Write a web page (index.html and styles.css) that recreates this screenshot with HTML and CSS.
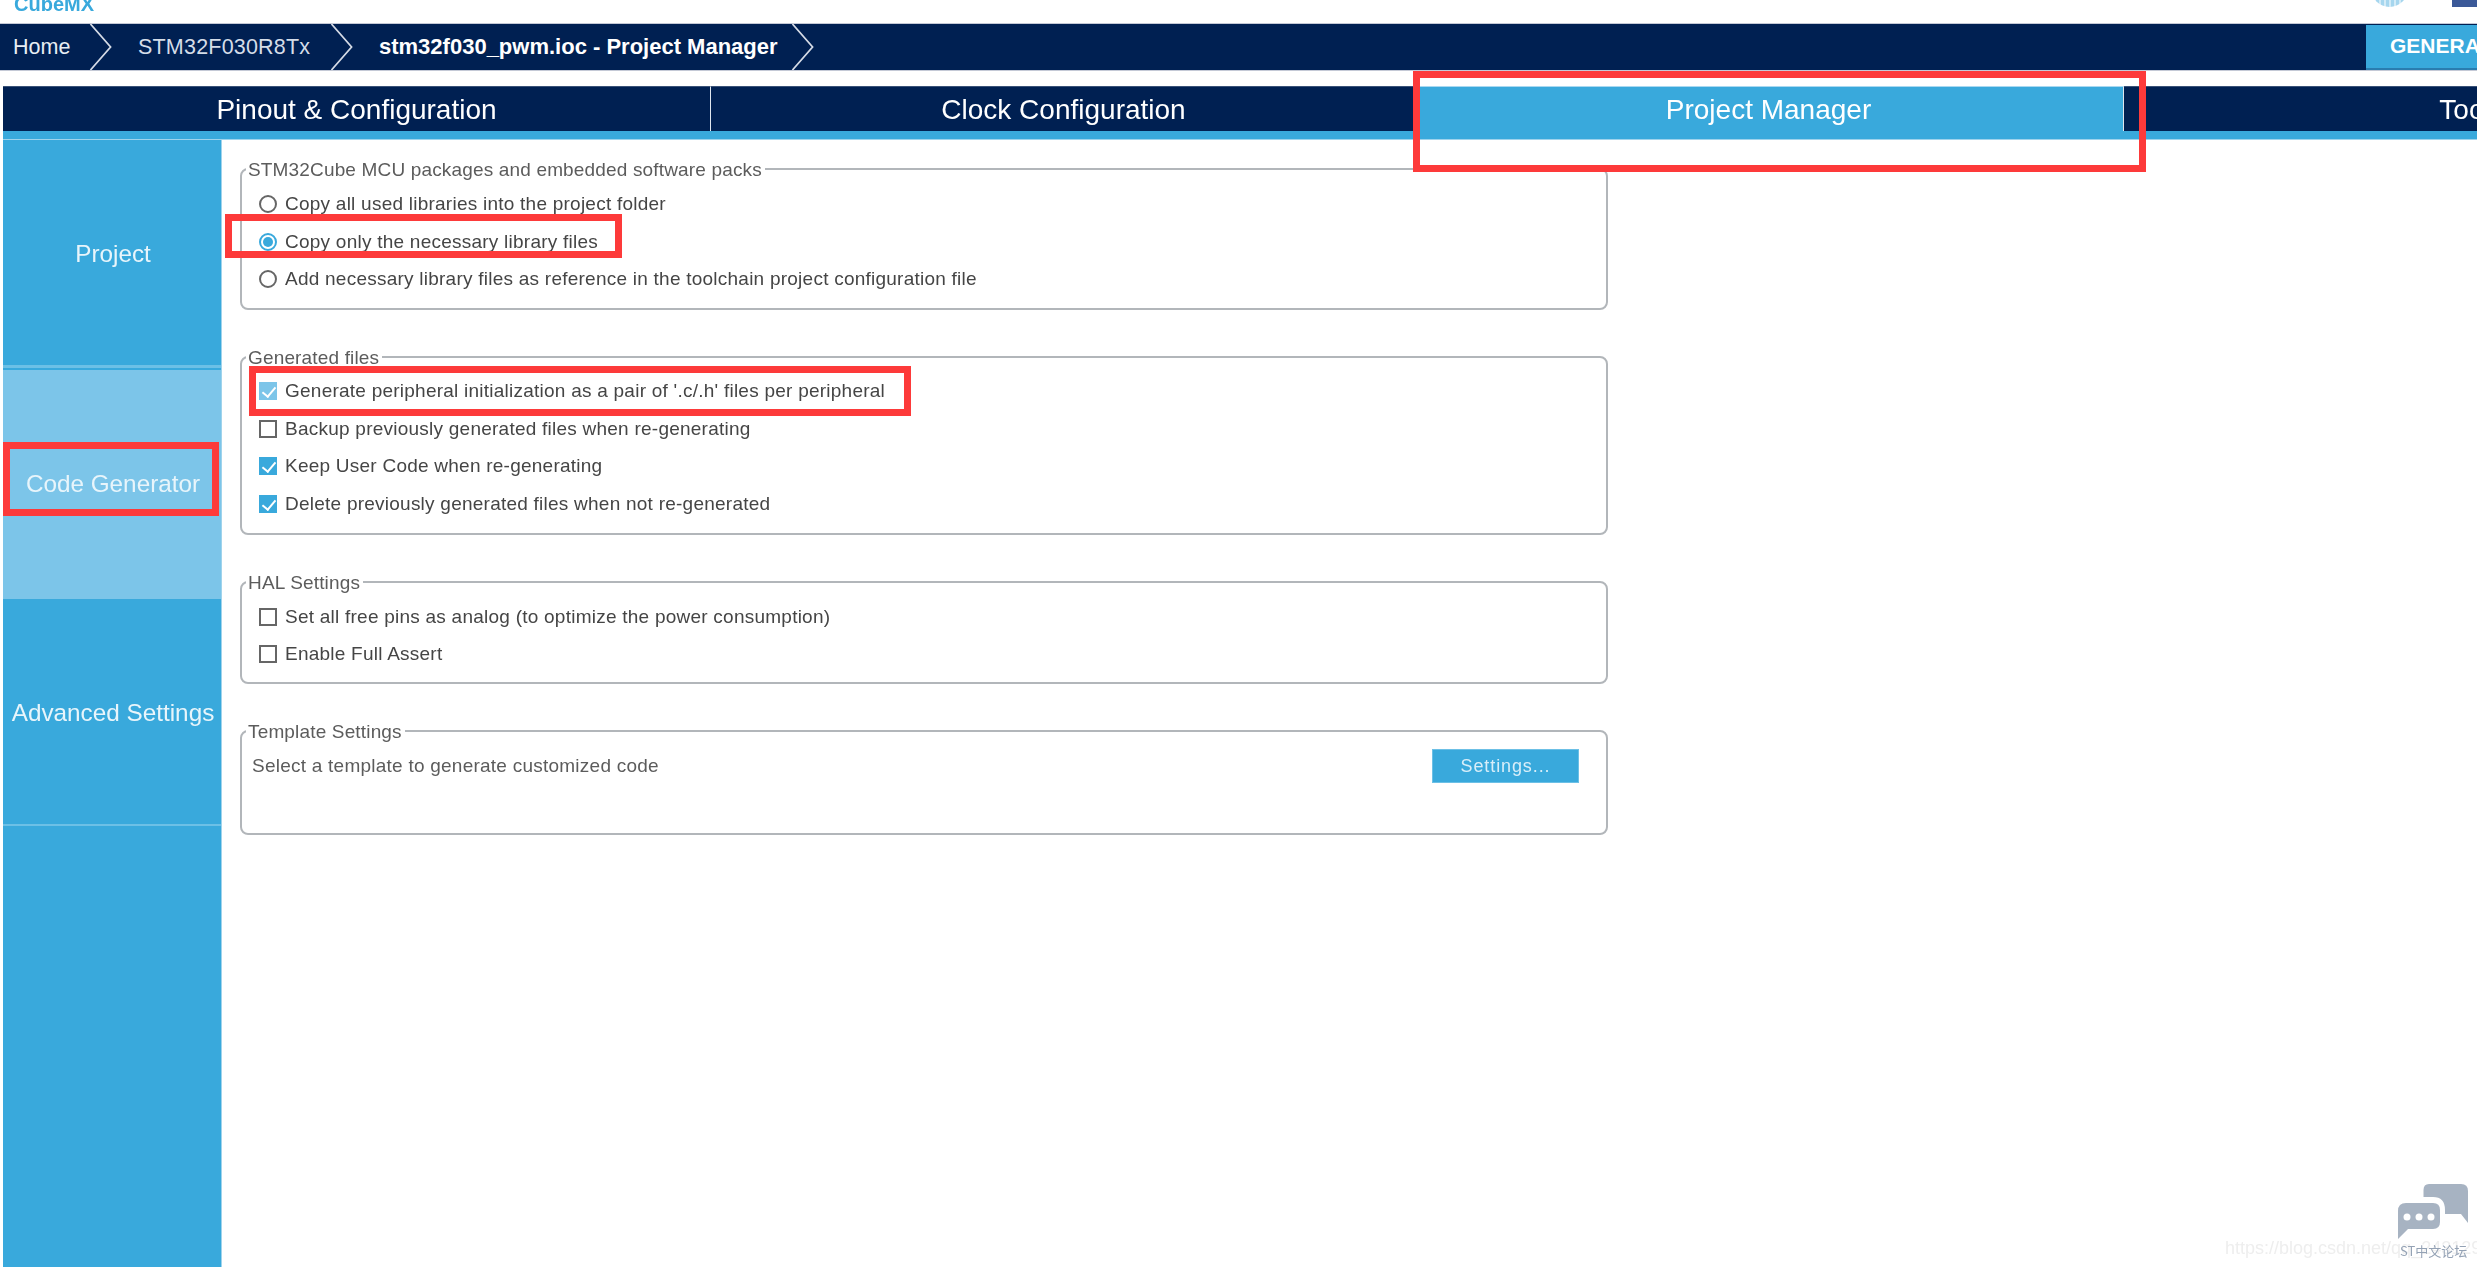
FILE: index.html
```html
<!DOCTYPE html>
<html lang="en">
<head>
<meta charset="utf-8">
<title>STM32CubeMX Project Manager</title>
<link rel="stylesheet" href="styles.css">
</head>
<body>
<header class="top">
  <span class="logo">CubeMX</span>
  <span class="globe"></span>
  <span class="social"></span>
</header>
<nav class="crumbs">
  <span class="crumb c1">Home</span>
  <svg class="chev" viewBox="0 0 24 48"><path d="M1 0 L22 24 L1 48" /></svg>
  <span class="crumb c2">STM32F030R8Tx</span>
  <svg class="chev" viewBox="0 0 24 48"><path d="M1 0 L22 24 L1 48" /></svg>
  <span class="crumb c3">stm32f030_pwm.ioc - Project Manager</span>
  <svg class="chev" viewBox="0 0 24 48"><path d="M1 0 L22 24 L1 48" /></svg>
  <button class="generate">GENERATE CODE</button>
</nav>
<div class="tabs">
  <div class="tab t1">Pinout &amp; Configuration</div>
  <div class="tab t2">Clock Configuration</div>
  <div class="tab t3 active">Project Manager</div>
  <div class="tab t4">Tools</div>
</div>
<div class="strip"></div>
<main class="main">
  <aside class="side">
    <div class="side-item s1">Project</div>
    <div class="side-item s2 current">Code Generator</div>
    <div class="side-item s3">Advanced Settings</div>
  </aside>
  <section class="content">
    <fieldset class="group g1">
      <legend>STM32Cube MCU packages and embedded software packs</legend>
      <div class="row"><span class="radio"></span>Copy all used libraries into the project folder</div>
      <div class="row"><span class="radio on"></span>Copy only the necessary library files</div>
      <div class="row"><span class="radio"></span>Add necessary library files as reference in the toolchain project configuration file</div>
    </fieldset>
    <fieldset class="group g2">
      <legend>Generated files</legend>
      <div class="row"><span class="check on dim"></span>Generate peripheral initialization as a pair of '.c/.h' files per peripheral</div>
      <div class="row"><span class="check"></span>Backup previously generated files when re-generating</div>
      <div class="row"><span class="check on"></span>Keep User Code when re-generating</div>
      <div class="row"><span class="check on"></span>Delete previously generated files when not re-generated</div>
    </fieldset>
    <fieldset class="group g3">
      <legend>HAL Settings</legend>
      <div class="row"><span class="check"></span>Set all free pins as analog (to optimize the power consumption)</div>
      <div class="row"><span class="check"></span>Enable Full Assert</div>
    </fieldset>
    <fieldset class="group g4">
      <legend>Template Settings</legend>
      <div class="template">
        <span class="template-text">Select a template to generate customized code</span>
        <button class="settings">Settings...</button>
      </div>
    </fieldset>
  </section>
</main>
<div class="mark box-tab"></div>
<div class="mark box-radio"></div>
<div class="mark box-check"></div>
<div class="mark box-side"></div>
<div class="watermark">https://blog.csdn.net/qq_24312945</div>
<div class="forum">
  <svg class="forum-icon" viewBox="0 0 70 54">
    <path class="bubble" d="M31 0 H63 Q70 0 70 7 V39 L63 30 H47 V26 Q47 13 35 13 H25.5 V6 Q25.5 0 31 0 Z"/>
    <path class="bubble" d="M8 19 H35 Q42 19 42 26 V38 Q42 45 35 45 H10 L0 55 V27 Q0 19 8 19 Z"/>
    <circle class="dot" cx="9" cy="33" r="3.5"/>
    <circle class="dot" cx="21" cy="33" r="3.5"/>
    <circle class="dot" cx="33" cy="33" r="3.5"/>
  </svg>
  <span class="forum-text">ST中文论坛</span>
</div>
</body>
</html>
```
FILE: styles.css
```css
* { box-sizing: border-box; }
html, body { height: 100%; margin: 0; overflow: hidden; }
body {
  position: relative;
  display: flex;
  flex-direction: column;
  width: 2477px;
  height: 1267px;
  background: #fff;
  font-family: "Liberation Sans", Arial, sans-serif;
  color: #454545;
  filter: blur(0.45px);
}
.top {
  position: relative;
  flex: 0 0 23px;
  overflow: hidden;
  padding-left: 14px;
}
.logo {
  display: block;
  margin-top: -8px;
  font-size: 20px;
  line-height: 24px;
  font-weight: bold;
  color: #39a9dc;
}
.globe {
  position: absolute;
  left: 2371px;
  top: -30px;
  width: 37px;
  height: 37px;
  border-radius: 50%;
  background: repeating-linear-gradient(90deg, #a6d6ee 0 3px, #d3ebf7 3px 5px);
}
.social {
  position: absolute;
  left: 2452px;
  top: 0;
  width: 25px;
  height: 7px;
  background: #3b5998;
}
.crumbs {
  flex: 0 0 48px;
  display: flex;
  align-items: center;
  background: #002052;
  border-top: 1px solid #c4c9d6;
  border-bottom: 1px solid #c4c9d6;
  color: #e8eef4;
  font-size: 21.5px;
  overflow: hidden;
}
.crumb { white-space: nowrap; }
.c1 { margin-left: 13px; width: 76px; }
.c2 { margin-left: 25px; width: 192px; letter-spacing: 0.2px; color: #d5dde8; }
.c3 { margin-left: 25px; width: 412px; font-weight: bold; font-size: 22px; color: #fff; }
.chev { flex: 0 0 24px; width: 24px; height: 46px; }
.chev path { fill: none; stroke: #d5dbe6; stroke-width: 1.8; }
.generate {
  margin-left: auto;
  flex: 0 0 111px;
  height: 45px;
  padding: 0 0 0 24px;
  border: 0;
  border-bottom: 2px solid #2a7db0;
  background: #39a9dc;
  color: #fff;
  font: bold 21px "Liberation Sans", Arial, sans-serif;
  text-align: left;
  white-space: nowrap;
  overflow: hidden;
}
.tabs {
  flex: 0 0 45px;
  display: flex;
  margin: 15px 0 0 3px;
  background: #002052;
  color: #fff;
  font-size: 28px;
}
.tab {
  display: flex;
  align-items: center;
  justify-content: center;
  padding-top: 1px;
  white-space: nowrap;
  border-top: 1px solid #3a5278;
}
.t1 { flex: 0 0 708px; border-right: 1px solid #dfe6ee; }
.t2 { flex: 0 0 709px; padding-right: 4px; }
.t3 { flex: 0 0 704px; padding-right: 6px; border-right: 1px solid #dfe6ee; border-top-color: #a9d8f0; }
.t4 { flex: 0 0 708px; padding-right: 12px; }
.active { background: #39a9dc; }
.strip { flex: 0 0 9px; margin-left: 3px; background: #39a9dc; border-bottom: 1px solid #9fd3ec; }
.main { flex: 1; display: flex; min-height: 0; }
.side {
  flex: 0 0 219px;
  margin-left: 3px;
  display: flex;
  flex-direction: column;
  background: #39a9dc;
  border-right: 1px solid #9fd3ec;
  color: #e8f5fb;
  font-size: 24.3px;
}
.side-item { display: flex; align-items: center; justify-content: center; padding-left: 2px; white-space: nowrap; }
.s1 { flex: 0 0 228px; padding-top: 2px; border-bottom: 3px solid #6cc0e6; }
.s2 { flex: 0 0 229px; margin-top: 2px; padding-bottom: 1px; }
.s3 { flex: 0 0 227px; padding-top: 2px; border-bottom: 2px solid #6cc0e6; }
.current { background: #7cc5e9; }
.content { flex: 1; padding: 19px 0 0 18px; }
.group {
  width: 1368px;
  margin: 0 0 37px;
  border: 2px solid #b2b6ba;
  border-radius: 8px;
  font-size: 19px;
  letter-spacing: 0.24px;
}
.group legend {
  margin-left: -13px;
  padding: 1px 3px 0 2px;
  line-height: 19px;
  font-size: 19px;
  letter-spacing: 0.16px;
  color: #5c5c5c;
}
.g1 { padding: 6px 16px 10px 17px; }
.g2 { padding: 5px 16px 10px 17px; }
.g3 { padding: 6px 16px 9px 17px; }
.g4 { height: 114px; padding: 5px 16px 9px 17px; }
.row {
  display: flex;
  align-items: center;
  gap: 8px;
  height: 37.7px;
  white-space: nowrap;
}
.radio, .check { position: relative; flex: 0 0 18px; width: 18px; height: 18px; }
.radio { border: 2px solid #666; border-radius: 50%; }
.radio.on { border-color: #39a9dc; }
.radio.on::after {
  content: "";
  position: absolute;
  left: 2px;
  top: 2px;
  width: 10px;
  height: 10px;
  border-radius: 50%;
  background: #39a9dc;
}
.check { border: 2px solid #666; }
.check.on { border-color: #39a9dc; background: #39a9dc; }
.check.on::after {
  content: "";
  position: absolute;
  left: 4px;
  top: 0;
  width: 6px;
  height: 11px;
  border: solid #fff;
  border-width: 0 2px 2px 0;
  transform: rotate(40deg);
}
.check.dim { border-color: #7cc5e9; background: #7cc5e9; }
.template {
  display: flex;
  align-items: center;
  justify-content: space-between;
  height: 34px;
  margin: 3px 11px 0 -7px;
}
.template-text { color: #5c5c5c; }
.settings {
  width: 147px;
  height: 34px;
  border: 1px solid #6cc0e6;
  background: #39a9dc;
  color: #d8eef9;
  font: 18px "Liberation Sans", Arial, sans-serif;
  letter-spacing: 0.9px;
}
.mark { position: absolute; border: 7px solid #fd3a3a; }
.box-tab { left: 1413px; top: 71px; width: 733px; height: 101px; }
.box-radio { left: 225px; top: 214px; width: 397px; height: 44px; }
.box-check { left: 249px; top: 366px; width: 662px; height: 50px; }
.box-side { left: 3px; top: 442px; width: 216px; height: 74px; }
.watermark {
  position: absolute;
  left: 2225px;
  top: 1237px;
  font-size: 18px;
  line-height: 22px;
  color: #eeeeee;
  white-space: nowrap;
}
.forum { position: absolute; left: 2400px; top: 1184px; width: 70px; }
.forum-icon { display: block; width: 70px; height: 54px; margin-left: -2px; overflow: visible; }
.bubble { fill: #a7b3c2; }
.dot { fill: #fff; }
.forum-text {
  display: block;
  margin-top: 4px;
  font: 13px/18px "Noto Sans CJK SC", "Liberation Sans", sans-serif;
  color: #94a2b5;
  white-space: nowrap;
}
```
